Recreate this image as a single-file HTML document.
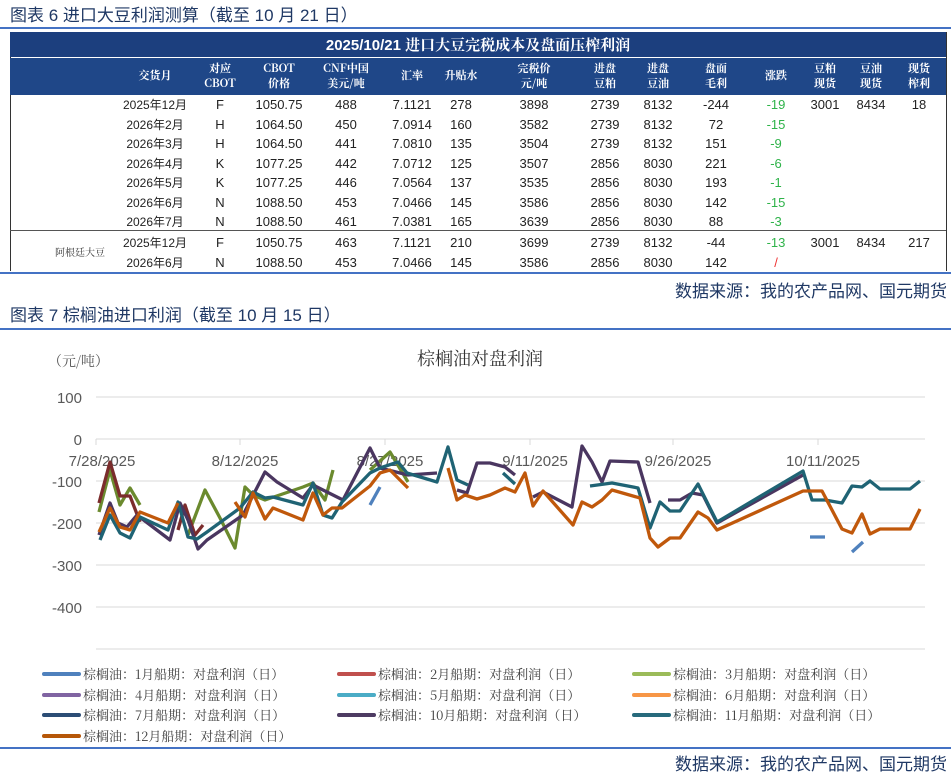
<!DOCTYPE html>
<html><head><meta charset="utf-8"><style>
body{margin:0;width:951px;height:781px;background:#fff;position:relative;overflow:hidden;font-family:"Liberation Sans","Noto Sans CJK SC",sans-serif}
.abs{position:absolute;white-space:nowrap}
.ttl{font-size:17px;color:#1f3864;left:10px;line-height:20px}
.hl{position:absolute;left:0;width:951px;height:2px;background:#4472c4}
.src{font-size:17px;color:#1f3864;right:4px;line-height:20px}
.t{font-family:"Liberation Sans Narrow","Liberation Sans","Noto Sans CJK SC",sans-serif;font-size:13px;line-height:16px;color:#222;transform:translateX(-50%)}
.h{font-family:"Noto Serif CJK SC","Liberation Sans",serif;font-size:11px;color:#fff;font-weight:bold;transform:translateX(-50%);text-align:center;line-height:15px}
.g{color:#2fb34a}
</style></head><body>
<div class="abs ttl" style="top:6px">图表 6 进口大豆利润测算（截至 10 月 21 日）</div>
<div class="hl" style="top:27px"></div>
<div class="abs" style="left:10px;top:32px;width:935px;height:239px;border:1px solid #333;border-top:none;border-bottom:none"></div>
<div class="abs" style="left:10px;top:32px;width:936px;height:25px;background:#1c3f7e"></div>
<div class="abs" style="left:10px;top:58px;width:936px;height:37px;background:#1f4788"></div>
<div class="abs" style="left:10px;top:230px;width:936px;height:1px;background:#555"></div>
<div class="abs" style="left:478px;top:36px;line-height:20px;transform:translateX(-50%);color:#fff;font-weight:bold;font-size:15px;font-family:'Liberation Sans','Noto Serif CJK SC',serif">2025/10/21 进口大豆完税成本及盘面压榨利润</div>
<div class="abs h" style="left:155px;top:68px">交货月</div>
<div class="abs h" style="left:220px;top:61px">对应<br>CBOT</div>
<div class="abs h" style="left:279px;top:61px">CBOT<br>价格</div>
<div class="abs h" style="left:346px;top:61px">CNF中国<br>美元/吨</div>
<div class="abs h" style="left:412px;top:68px">汇率</div>
<div class="abs h" style="left:461px;top:68px">升贴水</div>
<div class="abs h" style="left:534px;top:61px">完税价<br>元/吨</div>
<div class="abs h" style="left:605px;top:61px">进盘<br>豆粕</div>
<div class="abs h" style="left:658px;top:61px">进盘<br>豆油</div>
<div class="abs h" style="left:716px;top:61px">盘面<br>毛利</div>
<div class="abs h" style="left:776px;top:68px">涨跌</div>
<div class="abs h" style="left:825px;top:61px">豆粕<br>现货</div>
<div class="abs h" style="left:871px;top:61px">豆油<br>现货</div>
<div class="abs h" style="left:919px;top:61px">现货<br>榨利</div>
<div id="rows"></div>
<div class="abs" style="left:55px;top:245px;font-size:10px;line-height:14px;color:#333;font-family:'Noto Serif CJK SC',serif">阿根廷大豆</div>
<div class="hl" style="top:272px"></div>
<div class="abs src" style="top:282px">数据来源：我的农产品网、国元期货</div>
<div class="abs ttl" style="top:306px">图表 7 棕榈油进口利润（截至 10 月 15 日）</div>
<div class="hl" style="top:328px"></div>
<svg class="abs" style="left:0;top:0" width="951" height="781">
<g stroke="#d9d9d9" stroke-width="1">
<line x1="96" x2="925" y1="397" y2="397"/><line x1="96" x2="925" y1="439" y2="439"/><line x1="96" x2="925" y1="481" y2="481"/><line x1="96" x2="925" y1="523" y2="523"/><line x1="96" x2="925" y1="565" y2="565"/><line x1="96" x2="925" y1="607" y2="607"/><line x1="96" x2="925" y1="649" y2="649"/>
<line x1="96" x2="96" y1="439" y2="445"/><line x1="240" x2="240" y1="439" y2="445"/><line x1="385" x2="385" y1="439" y2="445"/><line x1="530" x2="530" y1="439" y2="445"/><line x1="673" x2="673" y1="439" y2="445"/><line x1="818" x2="818" y1="439" y2="445"/>
</g>
<g font-family="Liberation Sans,sans-serif" font-size="15" fill="#595959" text-anchor="end">
<text x="82" y="403">100</text><text x="82" y="445">0</text><text x="82" y="487">-100</text><text x="82" y="529">-200</text><text x="82" y="571">-300</text><text x="82" y="613">-400</text>
</g>
<g font-family="Liberation Sans,sans-serif" font-size="15" fill="#595959" text-anchor="middle">
<text x="102" y="466">7/28/2025</text><text x="245" y="466">8/12/2025</text><text x="390" y="466">8/27/2025</text><text x="535" y="466">9/11/2025</text><text x="678" y="466">9/26/2025</text><text x="823" y="466">10/11/2025</text>
</g>
<text x="480" y="365" font-family="Noto Serif CJK SC,serif" font-size="18" fill="#333" text-anchor="middle">棕榈油对盘利润</text>
<text x="48" y="366" font-family="Noto Serif CJK SC,serif" font-size="14" fill="#555">（元/吨）</text>
<g fill="none" stroke-width="3.3" stroke-linejoin="round">
<polyline stroke="#6b8a2e" points="99,512 110,470 120,505 130,488 140,505"/>
<polyline stroke="#6b8a2e" points="188,535 205,490 220,518 235,548 245,487 253,495 265,500 303,487 313,483 325,500 333,470"/>
<polyline stroke="#6b8a2e" points="370,470 390,452 408,482"/>
<polyline stroke="#7b2c2c" points="99,503 110,462 120,496 130,496 140,522"/>
<polyline stroke="#7b2c2c" points="178,530 185,505 195,535 203,525"/>
<polyline stroke="#4a3660" points="99,535 110,503 118,523 127,527 137,515 170,540 180,503 188,520 198,549 207,540 243,515 265,472 277,482 303,498 313,485 343,500 370,448 380,468 408,475 437,473"/>
<polyline stroke="#4a3660" points="457,490 467,493 477,463 490,463 505,467 515,475"/>
<polyline stroke="#4a3660" points="533,497 543,492 572,507 582,446 592,462 602,482 610,461 638,462 650,503"/>
<polyline stroke="#4a3660" points="668,500 680,500 692,493 703,495 717,523 803,475"/>
<polyline stroke="#1f6374" points="100,540 110,515 120,533 130,538 140,517 168,530 178,502 188,537 197,539 207,532 240,508 253,492 265,498 273,497 303,505 313,483 323,515 332,518 342,502 370,473 380,468 398,462 407,473 427,479 437,482 448,447 457,480 468,485"/>
<polyline stroke="#1f6374" points="503,473 515,484"/>
<polyline stroke="#1f6374" points="590,486 612,483 638,488 650,528 660,502 670,511 680,511 698,484 717,522 803,471 812,500 825,500 842,503 852,486 862,487 870,481 880,489 910,489 920,481"/>
<polyline stroke="#c0580b" points="99,532 110,508 120,527 130,530 140,512 168,523 178,503"/>
<polyline stroke="#c0580b" points="235,502 245,517 253,493 265,519 273,508 303,520 313,493 323,515 332,508 342,508 370,486 380,473 390,470 408,488"/>
<polyline stroke="#c0580b" points="448,468 457,500 465,495 477,499 490,495 505,488 515,492 525,473 533,506 543,491 573,525 582,502 592,507 602,500 612,490 640,498 650,538 658,547 670,538 680,538 698,512 708,518 717,530 803,491 822,491 842,529 852,533 862,514 870,534 880,529 910,529 920,509"/>
<polyline stroke="#4f81bd" points="370,505 380,487"/>
<polyline stroke="#4f81bd" points="810,537 825,537"/>
<polyline stroke="#4f81bd" points="852,552 863,542"/>
</g>
<g stroke-width="4" stroke-linecap="round">
<line x1="44" x2="79" y1="674" y2="674" stroke="#4f81bd"/><line x1="339" x2="374" y1="674" y2="674" stroke="#c0504d"/><line x1="634" x2="669" y1="674" y2="674" stroke="#9bbb59"/>
<line x1="44" x2="79" y1="695" y2="695" stroke="#8064a2"/><line x1="339" x2="374" y1="695" y2="695" stroke="#4bacc6"/><line x1="634" x2="669" y1="695" y2="695" stroke="#f79646"/>
<line x1="44" x2="79" y1="715" y2="715" stroke="#2c4d75"/><line x1="339" x2="374" y1="715" y2="715" stroke="#4d3b62"/><line x1="634" x2="669" y1="715" y2="715" stroke="#276a7c"/>
<line x1="44" x2="79" y1="736" y2="736" stroke="#b65708"/>
</g>
<g font-family="Noto Serif CJK SC,serif" font-size="13" fill="#404040">
<text x="83" y="679">棕榈油：1月船期：对盘利润（日）</text><text x="378" y="679">棕榈油：2月船期：对盘利润（日）</text><text x="673" y="679">棕榈油：3月船期：对盘利润（日）</text>
<text x="83" y="700">棕榈油：4月船期：对盘利润（日）</text><text x="378" y="700">棕榈油：5月船期：对盘利润（日）</text><text x="673" y="700">棕榈油：6月船期：对盘利润（日）</text>
<text x="83" y="720">棕榈油：7月船期：对盘利润（日）</text><text x="378" y="720">棕榈油：10月船期：对盘利润（日）</text><text x="673" y="720">棕榈油：11月船期：对盘利润（日）</text>
<text x="83" y="741">棕榈油：12月船期：对盘利润（日）</text>
</g>
</svg>
<div class="hl" style="top:747px"></div>
<div class="abs src" style="top:755px">数据来源：我的农产品网、国元期货</div>
<script>
var d=[[105,"2025年12月","F","1050.75","488","7.1121","278","3898","2739","8132","-244","-19","3001","8434","18"],
[125,"2026年2月","H","1064.50","450","7.0914","160","3582","2739","8132","72","-15"],
[144,"2026年3月","H","1064.50","441","7.0810","135","3504","2739","8132","151","-9"],
[164,"2026年4月","K","1077.25","442","7.0712","125","3507","2856","8030","221","-6"],
[183,"2026年5月","K","1077.25","446","7.0564","137","3535","2856","8030","193","-1"],
[203,"2026年6月","N","1088.50","453","7.0466","145","3586","2856","8030","142","-15"],
[222,"2026年7月","N","1088.50","461","7.0381","165","3639","2856","8030","88","-3"],
[243,"2025年12月","F","1050.75","463","7.1121","210","3699","2739","8132","-44","-13","3001","8434","217"],
[263,"2026年6月","N","1088.50","453","7.0466","145","3586","2856","8030","142","/"]];
var xs=[155,220,279,346,412,461,534,605,658,716,776,825,871,919],h="";
d.forEach(function(r){for(var i=1;i<r.length;i++){h+='<div class="abs t'+(i==11&&r[i]!="/"?' g':'')+'" style="left:'+xs[i-1]+'px;top:'+(r[0]-8)+'px'+(r[i]=="/"?';color:#e33':'')+(i==1?';font-size:12px':'')+'">'+r[i]+'</div>';}});
document.getElementById("rows").innerHTML=h;
</script>
</body></html>
